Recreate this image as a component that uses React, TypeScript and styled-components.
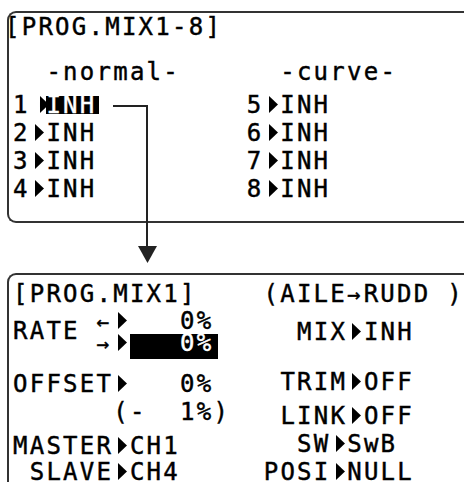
import React from "react";
import styled, { createGlobalStyle } from "styled-components";

// one LCD character cell (DejaVu Sans Mono 24px advance + letter-spacing)
const CELL = 16.7;

const GlobalStyle = createGlobalStyle`
  html, body {
    margin: 0;
    padding: 0;
    background: #fff;
    overflow: hidden;
  }
`;

const Page = styled.div`
  position: relative;
  box-sizing: border-box;
  width: 464px;
  height: 482px;
  padding-top: 11px;
  overflow: hidden;
  font-family: "DejaVu Sans Mono", "Liberation Mono", monospace;
  font-size: 24px;
  letter-spacing: 2.25px;
  -webkit-text-stroke: 0.45px #000;
  color: #000;
`;

const Screen = styled.section<{ $height: number; $gap?: number; $padTop: number }>`
  box-sizing: border-box;
  width: 480px;
  height: ${(p) => p.$height}px;
  margin: ${(p) => p.$gap ?? 0}px 0 0 7px;
  padding: ${(p) => p.$padTop}px 0 0 4px;
  border: 2px solid #333;
  border-right: none;
  border-radius: 9px 0 0 9px;
`;

const Line = styled.div<{ $mt?: number; $indent?: number }>`
  height: 20px;
  line-height: 20px;
  white-space: pre;
  margin-top: ${(p) => p.$mt ?? 0}px;
  margin-left: ${(p) => p.$indent ?? 0}px;
`;

const Inverse = styled.span<{ $tall?: boolean }>`
  display: inline-block;
  background: #000;
  color: #fff;
  -webkit-text-stroke: 0.45px #fff;
  line-height: 18px;
  padding-bottom: ${(p) => (p.$tall ? 7 : 0)}px;
  padding-right: ${(p) => (p.$tall ? 5 : 2)}px;
  margin-right: ${(p) => (p.$tall ? -5 : -2)}px;
`;

const Arrow = styled.span<{ $size?: number }>`
  display: inline-block;
  width: ${CELL}px;
  font-size: ${(p) => p.$size ?? 21}px;
  letter-spacing: 0;
  text-align: left;
`;

const TriSvg = styled.svg`
  width: ${CELL}px;
  height: 17px;
  vertical-align: baseline;
  fill: #000;
`;

const Tri = ({ x = 5 }: { x?: number }) => (
  <TriSvg viewBox={`0 0 ${CELL} 17`}>
    <polygon points={`${x},0 ${x + 9},8.5 ${x},17`} />
  </TriSvg>
);

const Body = styled.div`
  display: grid;
  grid-template-columns: 250px 151px;
  align-items: start;
`;

const Column = styled.div<{ $right?: boolean }>`
  display: flex;
  flex-direction: column;
  text-align: ${(p) => (p.$right ? "right" : "left")};
`;

const RateRow = styled.div`
  display: flex;
  align-items: center;
  height: 44px;
  margin-top: 5px;
  white-space: pre;
`;

const SubLines = styled.div`
  display: flex;
  flex-direction: column;
  gap: 2px;
  padding-top: 1px;
`;

const Connector = styled.svg`
  position: absolute;
  left: 0;
  top: 0;
  width: 464px;
  height: 482px;
  pointer-events: none;
`;

const channelRow = (n: number, selected?: boolean) => (
  <>
    {n}
    <Tri x={selected ? 10 : 5} />
    {selected ? <Inverse>INH</Inverse> : "INH"}
    {"         "}
    {n + 4}
    <Tri />
    INH
  </>
);

export default function App() {
  return (
    <Page>
      <GlobalStyle />
      <Screen $height={212} $padTop={4}>
        <Line $indent={-8}>[PROG.MIX1-8]</Line>
        <Line $mt={25}>{"  -normal-      -curve-"}</Line>
        <Line $mt={12.5}>{channelRow(1, true)}</Line>
        <Line $mt={8}>{channelRow(2)}</Line>
        <Line $mt={8}>{channelRow(3)}</Line>
        <Line $mt={8}>{channelRow(4)}</Line>
      </Screen>

      <Screen $height={230} $gap={50} $padTop={9}>
        <Line>
          {"[PROG.MIX1]    (AILE"}
          <Arrow $size={22}>→</Arrow>
          {"RUDD )"}
        </Line>
        <Body>
          <Column>
            <RateRow>
              {"RATE "}
              <SubLines>
                <Line>
                  <Arrow>←</Arrow>
                  <Tri />
                  {"   0%"}
                </Line>
                <Line>
                  <Arrow>→</Arrow>
                  <Tri />
                  <Inverse $tall>{"   0%"}</Inverse>
                </Line>
              </SubLines>
            </RateRow>
            <Line $mt={21}>
              OFFSET<Tri />
              {"   0%"}
            </Line>
            <Line $mt={8}>{"      (-  1%)"}</Line>
            <Line $mt={14}>
              MASTER<Tri />CH1
            </Line>
            <Line $mt={6}>
              {" SLAVE"}
              <Tri />CH4
            </Line>
          </Column>
          <Column $right>
            <Line $mt={18}>
              MIX<Tri />INH
            </Line>
            <Line $mt={30}>
              TRIM<Tri />OFF
            </Line>
            <Line $mt={14}>
              LINK<Tri />OFF
            </Line>
            <Line $mt={8}>
              SW<Tri />
              {"SwB "}
            </Line>
            <Line $mt={8}>
              POSI<Tri />NULL
            </Line>
          </Column>
        </Body>
      </Screen>

      <Connector viewBox="0 0 464 482">
        <polyline points="113,106 147,106 147,248" fill="none" stroke="#222" strokeWidth={2} />
        <polygon points="138,246 157,246 147.5,263" fill="#222" />
      </Connector>
    </Page>
  );
}
